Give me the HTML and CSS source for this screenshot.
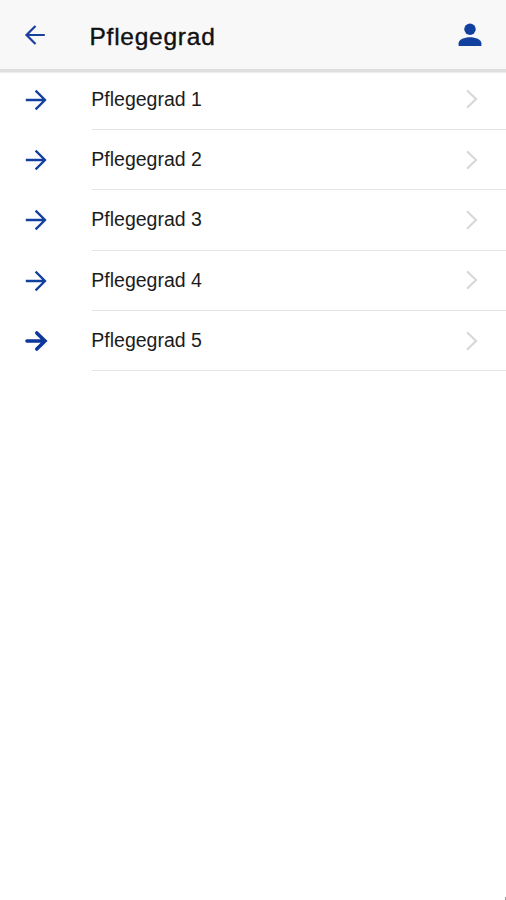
FILE: index.html
```html
<!DOCTYPE html>
<html lang="de">
<head>
<meta charset="utf-8">
<title>Pflegegrad</title>
<link rel="stylesheet" href="styles.css">
</head>
<body>
<svg class="defs" aria-hidden="true">
  <symbol id="arrow" viewBox="0 0 24 24"><path d="M1.8 12H21M11.6 2.6L21 12L11.6 21.4"/></symbol>
  <symbol id="arrow-bold" viewBox="0 0 24 24"><path d="M3 12H21M12.8 4L21 12L12.8 20"/></symbol>
  <symbol id="chevron" viewBox="0 0 14 20"><path d="M2 1.2L11 10L2 18.8"/></symbol>
</svg>
<header class="bar">
  <svg class="back" viewBox="0 0 22 22"><path d="M20.8 11H2.5M11.5 2L2.5 11L11.5 20"/></svg>
  <h1 class="title">Pflegegrad</h1>
  <svg class="user" viewBox="0 0 24 24"><circle cx="12" cy="6.2" r="5.7"/><path d="M.6 23V20.2C.6 16.5 6.5 14.2 12 14.2S23.4 16.5 23.4 20.2V23Z"/></svg>
</header>
<main class="list">
  <a class="row"><svg class="arrow"><use href="#arrow"/></svg><span class="cell">Pflegegrad 1<svg class="chevron"><use href="#chevron"/></svg></span></a>
  <a class="row"><svg class="arrow"><use href="#arrow"/></svg><span class="cell">Pflegegrad 2<svg class="chevron"><use href="#chevron"/></svg></span></a>
  <a class="row"><svg class="arrow"><use href="#arrow"/></svg><span class="cell">Pflegegrad 3<svg class="chevron"><use href="#chevron"/></svg></span></a>
  <a class="row"><svg class="arrow"><use href="#arrow"/></svg><span class="cell">Pflegegrad 4<svg class="chevron"><use href="#chevron"/></svg></span></a>
  <a class="row"><svg class="arrow bold"><use href="#arrow-bold"/></svg><span class="cell">Pflegegrad 5<svg class="chevron"><use href="#chevron"/></svg></span></a>
</main>
<i class="corner"></i>
</body>
</html>
```
FILE: styles.css
```css
* { box-sizing: border-box; }
body {
  margin: 0;
  height: 900px;
  position: relative;
  overflow: hidden;
  background: #fff;
  color: #1c1c1c;
  font-family: "Liberation Sans", Arial, sans-serif;
}
svg { flex: none; fill: none; }
.defs { position: absolute; width: 0; height: 0; }
.bar {
  display: flex;
  align-items: center;
  height: 72px;
  padding: 1px 24px 0;
  background: #f8f8f8;
  border-bottom: 3px solid #dfdfdf;
  box-shadow: 0 1px 1px #eee;
}
.back {
  width: 22px;
  height: 22px;
  stroke: #1b3f9c;
  stroke-width: 2.2;
}
.title {
  flex: 1;
  margin: 3px 0 0 43.5px;
  font-size: 24.5px;
  line-height: 30px;
  font-weight: 400;
  letter-spacing: .75px;
  color: #111;
  -webkit-text-stroke: .4px #111;
}
.user { width: 24px; height: 24px; fill: #12409f; }
.list { display: flex; flex-direction: column; margin-top: -2.3px; }
.row { display: flex; align-items: center; height: 60.3px; padding-left: 24px; }
.arrow {
  width: 24px;
  height: 24px;
  stroke: #12409f;
  stroke-width: 2.3;
}
.bold { stroke: #0e379b; stroke-width: 3.6; stroke-linecap: round; }
.cell {
  flex: 1;
  display: flex;
  align-items: center;
  justify-content: space-between;
  height: 100%;
  margin-left: 44px;
  padding-right: 27px;
  border-bottom: 1px solid #e4e4e4;
  font-size: 19.5px;
  text-indent: -.7px;
}
.chevron { width: 14px; height: 20px; stroke: #d8d8d8; stroke-width: 2.2; }
.corner {
  position: absolute;
  right: 0;
  bottom: 0;
  width: 1px;
  height: 3px;
  background: #999;
}
```
